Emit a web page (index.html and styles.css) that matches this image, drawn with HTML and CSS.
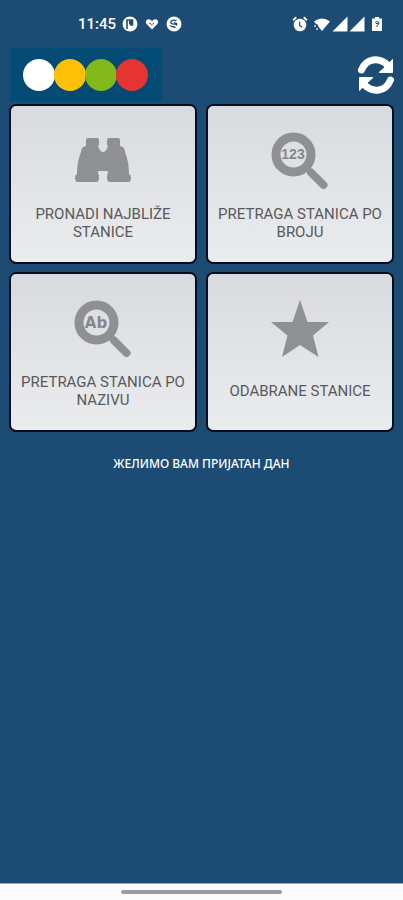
FILE: index.html
```html
<!DOCTYPE html>
<html lang="sr-Latn">
<head>
<meta charset="utf-8">
<meta name="viewport" content="width=device-width, initial-scale=1">
<title>Stanice</title>
<link rel="stylesheet" href="styles.css">
</head>
<body>
<div class="status">
  <div class="status-group">
    <span class="clock">11:45</span>
    <svg class="status-icon" viewBox="0 0 16 16" aria-hidden="true"><circle cx="8" cy="8" r="7.5" fill="#fff"/><path d="M5 13V4h5.500v5H8" fill="none" stroke="#1c4b73" stroke-width="1.600"/><path d="M7 4.500h3v4H7z" fill="#1c4b73"/></svg>
    <svg class="status-icon" viewBox="0 0 16 16" aria-hidden="true"><path d="M8 13.500 3 8.500C.8 6 2.200 3.200 4.600 3.200c1.500 0 2.700.8 3.400 2 .7-1.200 1.900-2 3.400-2 2.400 0 3.800 2.800 1.600 5.300z" fill="#fff"/><path d="M5 7.500h1.500l1 1.500L10 7" fill="none" stroke="#1c4b73" stroke-width=".8"/></svg>
    <svg class="status-icon" viewBox="0 0 16 16" aria-hidden="true"><circle cx="8" cy="8" r="7.500" fill="#fff"/><path d="M10.500 5C7 2.500 3 6 5.500 7.500s5-.5 5.500 2M4.500 9c.5 3 3 .8 5 2.500M8 6.500l3.500 1.500" fill="none" stroke="#1c4b73" stroke-width="1.300"/></svg>
  </div>
  <div class="status-group status-right">
    <svg class="status-icon" viewBox="0 0 16 16" aria-hidden="true"><circle cx="8" cy="9" r="6.300" fill="#fff"/><path d="M1 4.200 4.300 1.300M15 4.200l-3.300-2.900" stroke="#fff" stroke-width="1.800"/><path d="M7.700 5.500v4l2.500 1.700" fill="none" stroke="#1c4b73" stroke-width="1.200"/></svg>
    <svg class="status-icon wide" viewBox="0 0 18 16" aria-hidden="true"><path d="M1 5.500q8-6 16 0L9 15z" fill="#fff"/><path d="M1 8.500 4 12M4.500 8.500 1.500 12.500M1.500 14.500h3" stroke="#1c4b73" stroke-width="2"/><path d="M2 9v2M4 12v2" stroke="#fff" stroke-width="1.200"/></svg>
    <svg class="status-icon" viewBox="0 0 16 16" aria-hidden="true"><path d="M15.500.5v15H.5z" fill="#fff"/></svg>
    <svg class="status-icon" viewBox="0 0 16 16" aria-hidden="true"><path d="M15.500.5v15H.5z" fill="#fff"/></svg>
    <svg class="status-icon battery" viewBox="0 0 16 16" aria-hidden="true"><path d="M6 1h4v1.500h2.500q.5 0 .5.500v11.500q0 .5-.5.500h-9q-.5 0-.5-.5V3q0-.5.500-.5H6z" fill="#fff"/><path d="M6 6.500q2-2 4 0 .5 2-2 3V11M7 7.500h2" fill="none" stroke="#1c4b73" stroke-width="1"/></svg>
  </div>
</div>
<header class="bar">
  <div class="logo"><span class="dot white"></span><span class="dot yellow"></span><span class="dot green"></span><span class="dot red"></span></div>
  <button class="refresh" type="button" aria-label="Osveži">
    <svg viewBox="0 0 38 40" aria-hidden="true"><g id="arc"><path d="M4.500 15C9 3.500 22 1.500 31 10.500" fill="none" stroke="#fff" stroke-width="7" stroke-linecap="round"/><path d="M35.500 4.500v13H22l5-4.500z" fill="#fff" stroke="#fff" stroke-linejoin="round"/></g><use href="#arc" transform="rotate(180 19 20)"/></svg>
  </button>
</header>
<main>
  <div class="grid">
    <button class="card" type="button">
      <svg class="icon" viewBox="0 0 58 58" aria-hidden="true"><path d="M14 6h9q2 0 2 2v5l-1 1q2 6 5 6t5-6l-1-1V8q0-2 2-2h9q2 0 2 2v6q5 1 5 6 4 10 4 22 2 1 2 4t-2 4H36q-3 0-3-4t1-5q0-2-1-2h-8q-1 0-1 2 1 1 1 5t-3 4H3q-2-1-2-4t2-4q0-12 4-22 0-5 5-6V8q0-2 2-2z"/></svg>
      <span class="caption">PRONADI NAJBLIŽE STANICE</span>
    </button>
    <button class="card" type="button">
      <svg class="icon" viewBox="0 0 58 58" aria-hidden="true"><circle class="lens" cx="22.500" cy="22.500" r="17.500"/><path class="handle" d="m36 36 4 5"/><path class="grip" d="m40 40.500 12.500 12.500"/><text x="22" y="27" class="digits">123</text></svg>
      <span class="caption">PRETRAGA STANICA PO BROJU</span>
    </button>
    <button class="card" type="button">
      <svg class="icon" viewBox="0 0 58 58" aria-hidden="true"><circle class="lens" cx="22.500" cy="22.500" r="17.500"/><path class="handle" d="m36 36 4 5"/><path class="grip" d="m40 40.500 12.500 12.500"/><text x="22" y="28" class="letters">Ab</text></svg>
      <span class="caption">PRETRAGA STANICA PO NAZIVU</span>
    </button>
    <button class="card" type="button">
      <svg class="icon" viewBox="0 0 58 58" aria-hidden="true"><path d="M29 0 36.500 22H58L42 35.500 47.500 57 29 45 11 57l5.500-21.500L0 22h21.500z"/></svg>
      <span class="caption">ODABRANE STANICE</span>
    </button>
  </div>
  <p class="wish" lang="sr-Cyrl">ЖЕЛИМО ВАМ ПРИЈАТАН ДАН</p>
</main>
<footer class="nav"><span class="pill"></span></footer>
</body>
</html>
```
FILE: styles.css
```css
* {
  box-sizing: border-box;
}

body {
  margin: 0;
  min-height: 100vh;
  display: flex;
  flex-direction: column;
  background: #1c4b73;
  font-family: Roboto, "Noto Sans", sans-serif;
}

.status {
  display: flex;
  justify-content: space-between;
  height: 48px;
  padding: 0 18px 0 78px;
}

.status-group {
  display: flex;
  align-items: center;
  gap: 6px;
}

.status-right {
  gap: 1px;
}

.clock {
  color: #fff;
  font-size: 15px;
  font-weight: 500;
}

.status-icon {
  width: 16px;
  height: 16px;
}

.wide {
  width: 18px;
  margin-left: 4px;
}

.battery {
  margin-left: 3px;
}

.bar {
  display: flex;
  justify-content: space-between;
  align-items: center;
  padding: 0 8px 0 10px;
}

.logo {
  display: flex;
  align-items: center;
  height: 53px;
  padding: 0 14px 0 13px;
  background: #034b74;
}

.dot {
  width: 32px;
  height: 32px;
  margin-right: -1px;
  border-radius: 50%;
}

.dot:last-child {
  margin-right: 0;
}

.white { background: #fff; }
.yellow { background: #fdc005; }
.green { background: #83b81a; }
.red { background: #e63433; }

.refresh {
  display: flex;
  padding: 0;
  border: 0;
  background: none;
}

.refresh svg {
  width: 38px;
  height: 40px;
}

main {
  flex: 1;
}

.grid {
  display: grid;
  grid-template-columns: 1fr 1fr;
  gap: 8px 9px;
  padding: 3px 9px 0;
}

.card {
  display: flex;
  flex-direction: column;
  align-items: center;
  gap: 15px;
  min-height: 160px;
  padding: 26px 8px 0;
  border: 2px solid #050d20;
  border-radius: 7px;
  background: linear-gradient(#d9dadf, #ebecee);
  font-family: inherit;
}

.icon {
  width: 58px;
  height: 58px;
  fill: #8e9093;
}

.lens {
  fill: none;
  stroke: #8e9093;
  stroke-width: 9;
}

.handle {
  fill: none;
  stroke: #8e9093;
  stroke-width: 6;
}

.grip {
  fill: none;
  stroke: #8e9093;
  stroke-width: 8;
  stroke-linecap: round;
}

.digits,
.letters {
  font-family: "Liberation Sans", sans-serif;
  font-weight: 700;
  text-anchor: middle;
  fill: #85878a;
}

.digits {
  font-size: 14px;
}

.letters {
  font-family: "DejaVu Sans", sans-serif;
  font-size: 15px;
}

.caption {
  display: flex;
  align-items: center;
  justify-content: center;
  min-height: 36px;
  color: #58595c;
  font-size: 15px;
  line-height: 18px;
  text-align: center;
}

.wish {
  margin: 23px 0 0;
  color: #fff;
  font-family: "Noto Sans", sans-serif;
  font-size: 12px;
  font-weight: 500;
  line-height: 18px;
  text-align: center;
}

.nav {
  display: flex;
  justify-content: center;
  height: 17px;
  padding-top: 6px;
  border-top: 1px solid #8fa5c0;
  background: #fcfbfc;
}

.pill {
  width: 40%;
  height: 4px;
  border-radius: 2px;
  background: #9c9c9c;
}
```
